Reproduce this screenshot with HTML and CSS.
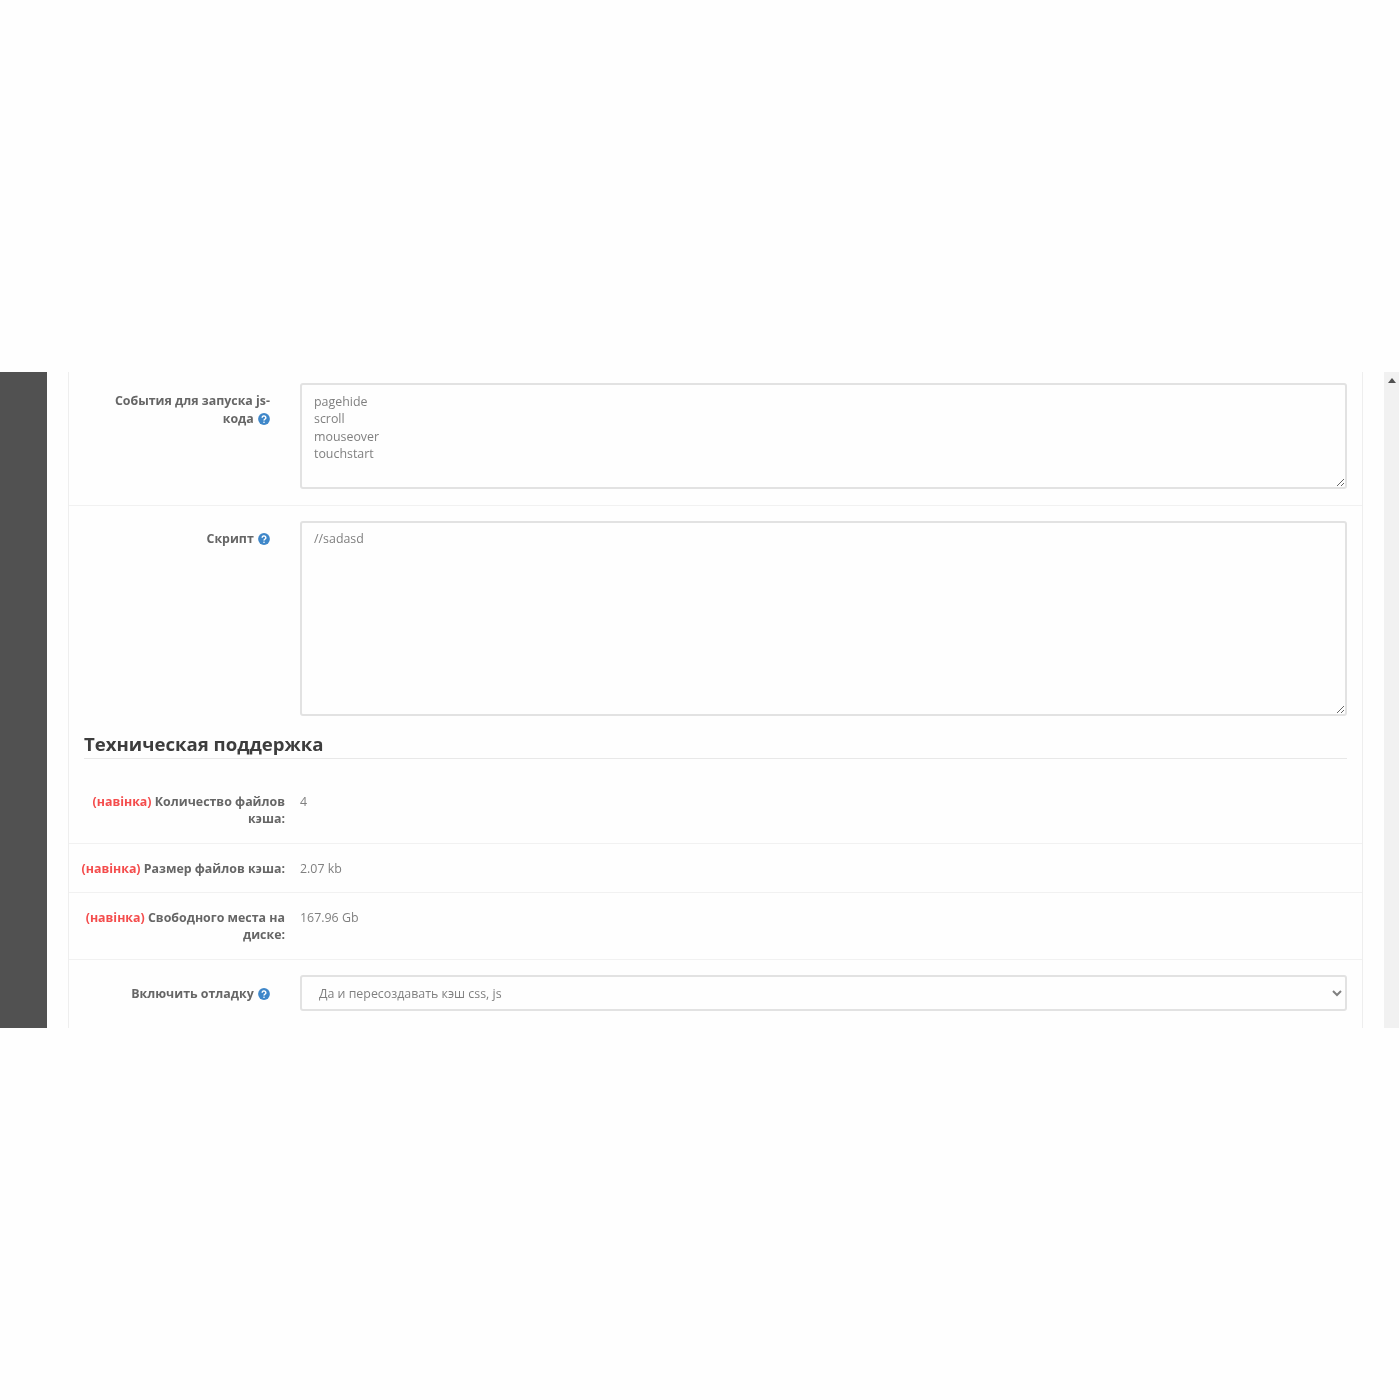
FILE: index.html
```html
<!DOCTYPE html>
<html lang="ru">
<head>
<meta charset="utf-8">
<title>Настройки</title>
<link rel="stylesheet" href="styles.css">
</head>
<body>
<div class="frame">
  <aside class="sidebar"></aside>
  <main class="main">
    <div class="panel">
      <div class="row row-events">
        <label class="label label-help">События для запуска js-кода <svg class="help" viewBox="0 0 12 12"><circle cx="6" cy="6" r="5.9"/><path d="M4.2 4.7a1.8 1.7 0 1 1 2.9 1.3c-.7.5-1.1.8-1.1 1.5"/><circle class="dot" cx="6" cy="9.2" r=".8"/></svg></label>
        <div class="field"><textarea class="input area-small" spellcheck="false">pagehide
scroll
mouseover
touchstart</textarea></div>
      </div>
      <div class="row row-script">
        <label class="label label-help">Скрипт <svg class="help" viewBox="0 0 12 12"><circle cx="6" cy="6" r="5.9"/><path d="M4.2 4.7a1.8 1.7 0 1 1 2.9 1.3c-.7.5-1.1.8-1.1 1.5"/><circle class="dot" cx="6" cy="9.2" r=".8"/></svg></label>
        <div class="field"><textarea class="input area-large" spellcheck="false">//sadasd</textarea></div>
      </div>
      <h3 class="legend">Техническая поддержка</h3>
      <div class="row row-count">
        <div class="label"><b class="new">(навінка)</b> Количество файлов кэша:</div>
        <div class="value">4</div>
      </div>
      <div class="row row-size">
        <div class="label"><b class="new">(навінка)</b> Размер файлов кэша:</div>
        <div class="value">2.07 kb</div>
      </div>
      <div class="row row-free">
        <div class="label"><b class="new">(навінка)</b> Свободного места на диске:</div>
        <div class="value">167.96 Gb</div>
      </div>
      <div class="row row-debug">
        <label class="label label-help">Включить отладку <svg class="help" viewBox="0 0 12 12"><circle cx="6" cy="6" r="5.9"/><path d="M4.2 4.7a1.8 1.7 0 1 1 2.9 1.3c-.7.5-1.1.8-1.1 1.5"/><circle class="dot" cx="6" cy="9.2" r=".8"/></svg></label>
        <div class="field"><select class="input select"><option>Да и пересоздавать кэш css, js</option></select></div>
      </div>
    </div>
  </main>
  <div class="scrollbar"><span class="scroll-up"></span></div>
</div>
</body>
</html>
```
FILE: styles.css
```css
* { box-sizing: border-box; }
html, body { margin: 0; background: #fefefe; }
body {
  height: 1400px;
  padding-top: 372px;
  font-family: "Open Sans", "Noto Sans", sans-serif;
  font-size: 12.4px;
  line-height: 17.5px;
  color: #666;
  overflow: hidden;
}
.frame {
  display: flex;
  height: 656px;
  overflow: hidden;
  filter: blur(0.45px);
}
.sidebar { flex: 0 0 47px; background: #515151; }
.main { flex: 0 0 1337px; padding-left: 21px; overflow: hidden; }
.panel {
  width: 1295px;
  min-height: 656px;
  border-left: 1px solid #eeeeee;
  border-right: 1px solid #eeeeee;
}
.scrollbar {
  flex: 0 0 15px;
  background: #f1f1f1;
  display: flex;
  justify-content: center;
  padding-top: 6px;
}
.scroll-up {
  width: 0;
  height: 0;
  border-left: 4px solid transparent;
  border-right: 4px solid transparent;
  border-bottom: 5px solid #505050;
}
.row {
  display: flex;
  padding: 16px 15px 0 0;
  border-bottom: 1px solid #f1f1f1;
}
.row-events { height: 134px; padding-top: 11px; }
.row-script { height: 211px; padding-top: 15px; border-bottom: 0; }
.row-count { height: 85px; padding-top: 34px; line-height: 17px; }
.row-size { height: 49px; }
.row-free { height: 67px; line-height: 17px; }
.row-debug { border-bottom: 0; padding-top: 15px; }
.label {
  flex: 0 0 216px;
  padding-left: 12px;
  text-align: right;
  font-weight: 700;
  color: #666;
}
.row-free .label { padding-left: 16px; }
.label-help { padding: 9px 15px 0 30px; }
.row-debug .label-help { padding-top: 10px; }
.new { color: #f44c4c; font-weight: 700; }
.help {
  width: 12px;
  height: 12px;
  vertical-align: -2px;
  margin-left: 1px;
}
.help circle { fill: #3f87c9; }
.help path { fill: none; stroke: #fff; stroke-width: 1.5; }
.help .dot { fill: #fff; }
.field, .value { flex: 1; padding-left: 15px; }
.value { color: #808080; }
.input {
  display: block;
  width: 100%;
  margin: 0;
  border: 2px solid #e2e2e2;
  border-radius: 3px;
  outline: none;
  background: #fefefe;
  font: inherit;
  line-height: 17.4px;
  color: #808080;
}
.area-small, .area-large { padding: 8px 12px; resize: vertical; }
.area-small { height: 106px; }
.area-large { height: 195px; padding-top: 7px; }
.select { height: 36px; padding: 0 8px 0 13px; }
.legend {
  margin: 14px 15px 0;
  padding: 0 0 1px;
  font-size: 18.6px;
  line-height: 26px;
  font-weight: 700;
  color: #3d3d3d;
  border-bottom: 1px solid #e8e8e8;
}
```
